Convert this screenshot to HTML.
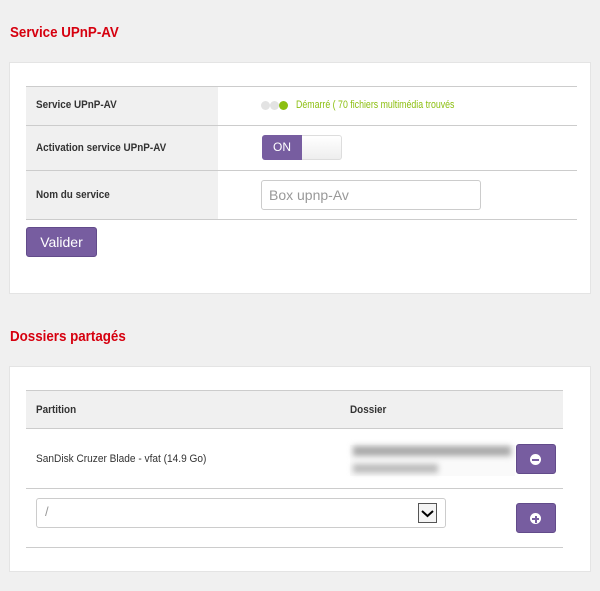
<!DOCTYPE html>
<html><head><meta charset="utf-8"><style>
*{box-sizing:border-box;margin:0;padding:0}
body{width:600px;height:591px;background:#f0f0f0;font-family:"Liberation Sans",sans-serif;position:relative;overflow:hidden;color:#333}
.abs{position:absolute;white-space:nowrap}
h2{position:absolute;left:10px;font-size:15px;color:#d6000f;font-weight:bold;transform:scaleX(0.89);transform-origin:left;white-space:nowrap}
.panel{position:absolute;left:9px;width:582px;background:#fff;border:1px solid #e4e4e4}
.lbl{position:absolute;left:26px;width:192px;background:#f0f0f0}
.t{position:absolute;font-size:11px;font-weight:bold;color:#333;transform:scaleX(0.9);transform-origin:left;white-space:nowrap}
.n{transform:scaleX(0.86);transform-origin:left}
.line{position:absolute;height:1px;background:#ccc}
.btn{position:absolute;background:#775da0;border:1px solid #624b8a;border-radius:3px}
</style></head><body>
<h2 style="top:24px">Service UPnP-AV</h2>
<div class="panel" style="top:62px;height:232px"></div>
<div class="lbl" style="top:87px;height:132px"></div>
<div class="line" style="left:26px;width:551px;top:86px"></div>
<div class="line" style="left:26px;width:551px;top:125px"></div>
<div class="line" style="left:26px;width:551px;top:170px"></div>
<div class="line" style="left:26px;width:551px;top:219px"></div>
<div class="t" style="left:36px;top:99px">Service UPnP-AV</div>
<div class="t" style="left:36px;top:142px">Activation service UPnP-AV</div>
<div class="t" style="left:36px;top:189px">Nom du service</div>
<div class="abs" style="left:261px;top:101px;width:9px;height:9px;border-radius:50%;background:#e3e3e3"></div>
<div class="abs" style="left:270px;top:101px;width:9px;height:9px;border-radius:50%;background:#e3e3e3"></div>
<div class="abs" style="left:279px;top:101px;width:9px;height:9px;border-radius:50%;background:#8cbf10"></div>
<div class="abs n" style="left:296px;top:99px;font-size:11px;color:#8cbf10;transform:scaleX(0.8)">Démarré ( 70 fichiers multimédia trouvés</div>
<div class="abs" style="left:262px;top:135px;width:80px;height:25px;border:1px solid #ddd;border-radius:3px;background:linear-gradient(#fff,#eee)"></div>
<div class="abs" style="left:262px;top:135px;width:40px;height:25px;background:#775da0;border-radius:3px 0 0 3px;color:#fff;font-size:12px;text-align:center;line-height:25px">ON</div>
<div class="abs" style="left:261px;top:180px;width:220px;height:30px;border:1px solid #ccc;border-radius:3px;font-size:14px;color:#999;padding-left:7px;line-height:28px">Box upnp-Av</div>
<div class="btn" style="left:26px;top:227px;width:71px;height:30px;color:#fff;font-size:14px;text-align:center;line-height:28px">Valider</div>

<h2 style="top:328px">Dossiers partagés</h2>
<div class="panel" style="top:366px;height:206px"></div>
<div class="abs" style="left:26px;top:390px;width:537px;height:39px;background:#f0f0f0;border-top:1px solid #ccc;border-bottom:1px solid #ccc"></div>
<div class="t" style="left:36px;top:404px">Partition</div>
<div class="t" style="left:350px;top:404px">Dossier</div>
<div class="abs n" style="left:36px;top:453px;font-size:11px;color:#333;transform:scaleX(0.92)">SanDisk Cruzer Blade - vfat (14.9 Go)</div>
<div class="abs" style="left:350px;top:445px;width:165px;height:31px;background:#fafafa"></div>
<div class="abs" style="left:353px;top:446px;width:158px;height:10px;background:#aaa;filter:blur(3px)"></div>
<div class="abs" style="left:353px;top:464px;width:85px;height:9px;background:#bbb;filter:blur(3px)"></div>
<div class="btn" style="left:516px;top:444px;width:40px;height:30px"><div class="abs" style="left:13px;top:9px;width:11px;height:11px;border-radius:50%;background:#fff"></div><div class="abs" style="left:15px;top:14px;width:7px;height:2px;background:#775da0"></div></div>
<div class="line" style="left:26px;width:537px;top:488px"></div>
<div class="abs" style="left:36px;top:498px;width:410px;height:30px;border:1px solid #ccc;border-radius:3px;font-size:13px;color:#999;padding-left:8px;line-height:26px">/</div>
<div class="abs" style="left:418px;top:503px;width:19px;height:20px;border:1px solid #555;background:#f4f4f4"><svg width="17" height="18" viewBox="0 0 17 18"><path d="M3 7l5.5 5 5.5-5" stroke="#000" stroke-width="2" fill="none"/></svg></div>
<div class="btn" style="left:516px;top:503px;width:40px;height:30px"><div class="abs" style="left:13px;top:9px;width:11px;height:11px;border-radius:50%;background:#fff"></div><div class="abs" style="left:15px;top:14px;width:7px;height:2px;background:#775da0"></div><div class="abs" style="left:17.5px;top:11.5px;width:2px;height:7px;background:#775da0"></div></div>
<div class="line" style="left:26px;width:537px;top:547px"></div>
</body></html>
